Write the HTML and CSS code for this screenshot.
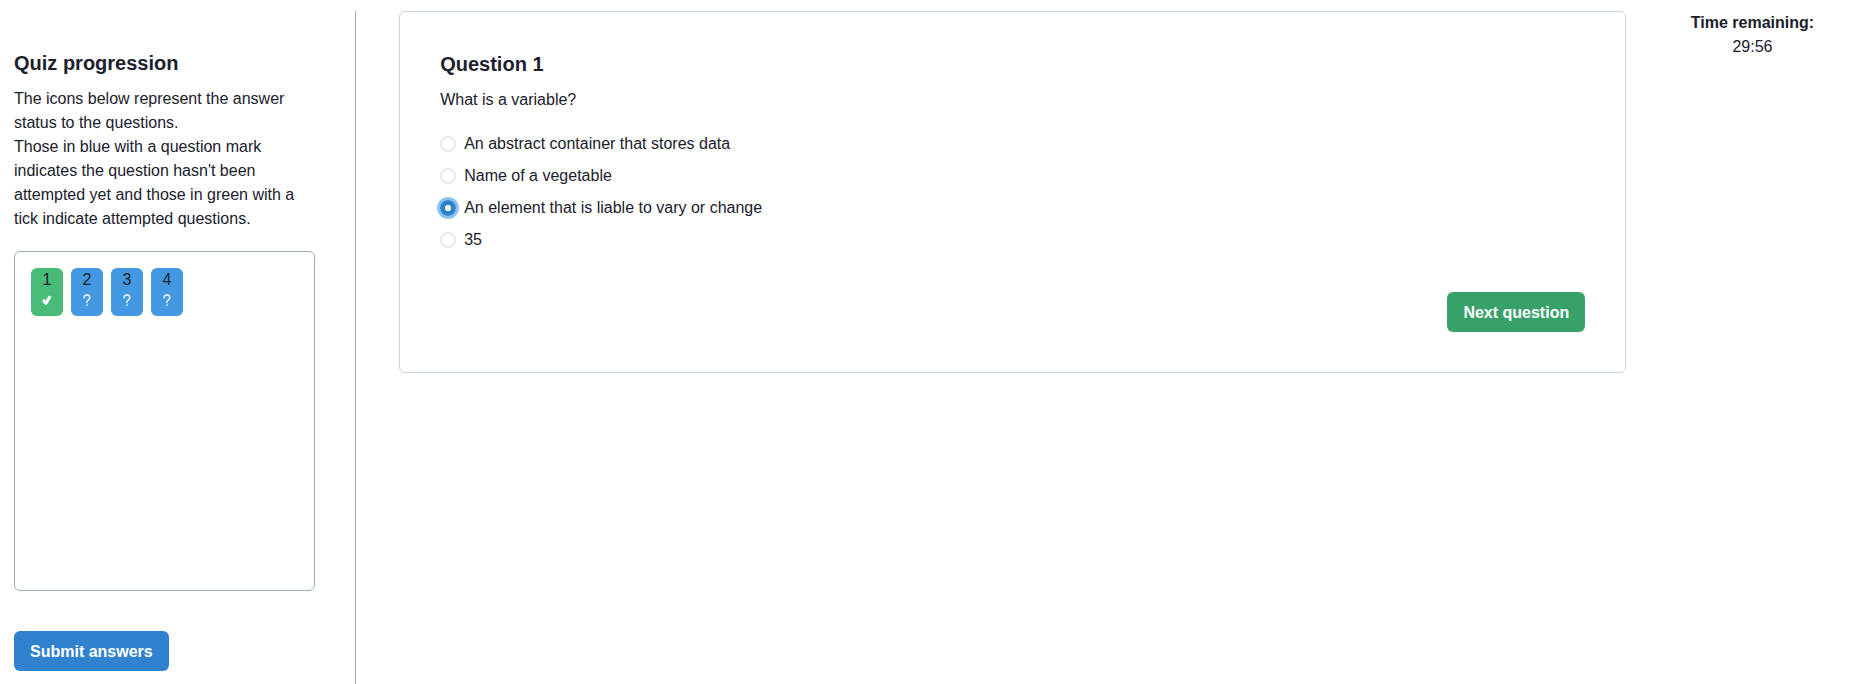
FILE: index.html
```html
<!DOCTYPE html>
<html lang="en">
<head>
<meta charset="utf-8">
<title>Quiz</title>
<link rel="stylesheet" href="styles.css">
</head>
<body>
<svg class="symbols" aria-hidden="true">
  <symbol id="tick" viewBox="0 0 16 16"><path d="M3.2 8.9L5 7.1 6.7 8.7 9.9 3.7 12.3 4.9 8.1 12.1Q7.1 13.5 5.9 12.4Z" stroke="currentColor" stroke-width=".3" stroke-linejoin="round"/></symbol>
  <symbol id="question" viewBox="0 0 16 16"><path d="M5.2 5.8A2.8 2.8 0 0 1 10.8 5.8C10.8 7.8 8 8.1 8 10V10.7" fill="none" stroke="currentColor" stroke-width="1.35" stroke-linecap="round"/><circle cx="8" cy="13" r=".85"/></symbol>
</svg>
<div class="page">
  <aside class="sidebar">
    <h2 class="heading">Quiz progression</h2>
    <p class="text">The icons below represent the answer status to the questions.<br>Those in blue with a question mark indicates the question hasn't been attempted yet and those in green with a tick indicate attempted questions.</p>
    <div class="progress">
      <div class="tile tile-done"><span>1</span><svg class="icon"><use href="#tick"/></svg></div>
      <div class="tile"><span>2</span><svg class="icon"><use href="#question"/></svg></div>
      <div class="tile"><span>3</span><svg class="icon"><use href="#question"/></svg></div>
      <div class="tile"><span>4</span><svg class="icon"><use href="#question"/></svg></div>
    </div>
    <button class="button button-submit">Submit answers</button>
  </aside>
  <main class="card">
    <h2 class="heading">Question 1</h2>
    <p class="text">What is a variable?</p>
    <div class="options">
      <label class="option"><input class="radio" type="radio" name="answer">An abstract container that stores data</label>
      <label class="option"><input class="radio" type="radio" name="answer">Name of a vegetable</label>
      <label class="option"><input class="radio" type="radio" name="answer" checked>An element that is liable to vary or change</label>
      <label class="option"><input class="radio" type="radio" name="answer">35</label>
    </div>
    <button class="button button-next">Next question</button>
  </main>
  <div class="timer"><strong>Time remaining:</strong><span>29:56</span></div>
</div>
</body>
</html>
```
FILE: styles.css
```css
* { box-sizing: border-box; margin: 0; padding: 0; }
body {
  font-family: "Liberation Sans", Arial, sans-serif;
  font-size: 16px;
  line-height: 24px;
  color: #1a202c;
  background: #fff;
  overflow: hidden;
}
.symbols { display: none; }
.page { display: flex; align-items: flex-start; height: 684px; padding: 11px 0 0 14px; }
.sidebar {
  display: flex;
  flex-direction: column;
  align-items: flex-start;
  flex: none;
  width: 342px;
  height: 673px;
  padding: 40px 40px 0 0;
  border-right: 1px solid #a0aec0;
}
.heading { font-size: 20px; line-height: 24px; font-weight: 700; margin-bottom: 12px; }
.progress {
  display: flex;
  align-items: flex-start;
  gap: 8px;
  width: 301px;
  height: 340px;
  margin: 20px 0 40px;
  padding: 16px;
  border: 1px solid #a0aec0;
  border-radius: 6px;
}
.tile {
  display: flex;
  flex-direction: column;
  align-items: center;
  width: 32px;
  height: 48px;
  border-radius: 6px;
  background: #4299e1;
}
.tile-done { background: #48bb78; }
.icon { width: 16px; height: 16px; color: #fff; fill: #fff; }
.button {
  height: 40px;
  padding: 1px 16px 0;
  border: 0;
  border-radius: 6px;
  font: 600 16px/19px "Liberation Sans", Arial, sans-serif;
  color: #fff;
}
.button-submit { background: #3182ce; }
.button-next { align-self: flex-end; background: #38a169; }
.card {
  display: flex;
  flex-direction: column;
  flex: none;
  width: 1227px;
  margin-left: 43.2px;
  padding: 40px;
  border: 1px solid #cbd5e0;
  border-radius: 6px;
}
.options { display: flex; flex-direction: column; gap: 8px; margin: 20px 0 40px; }
.option { display: flex; align-items: center; gap: 8px; }
.radio {
  appearance: none;
  width: 16px;
  height: 16px;
  border: 2px solid #e2e8f0;
  border-radius: 50%;
}
.radio:checked {
  border-color: #3182ce;
  background: radial-gradient(circle, #fff 2.8px, #3182ce 3.3px);
  box-shadow: 0 0 0 3px rgba(66, 153, 225, .6);
}
.timer { display: flex; flex: 1; flex-direction: column; align-items: center; margin-left: 18.8px; }
```
